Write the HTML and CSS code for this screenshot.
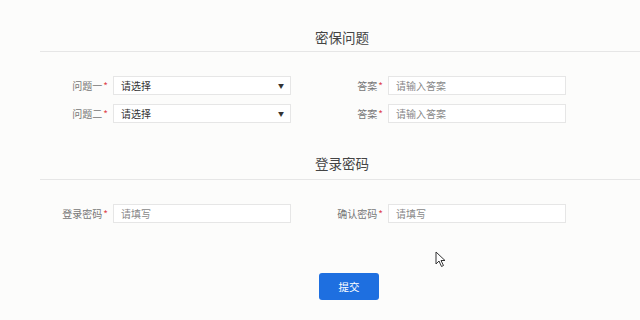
FILE: index.html
```html
<!DOCTYPE html>
<html lang="zh-CN">
<head>
    <meta charset="UTF-8">
    <meta name="viewport" content="width=device-width, initial-scale=1.0">
    <title>密保问题</title>
    <link rel="stylesheet" href="styles.css">
</head>
<body>
    <div class="container">
        <!-- 密保问题 -->
        <div class="section-title first">密保问题</div>
        <div class="rows">
            <div class="row">
                <div class="field">
                    <label>问题一<span class="req">*</span></label>
                    <div class="select"><span>请选择</span><span class="arrow">▼</span></div>
                </div>
                <div class="field">
                    <label>答案<span class="req">*</span></label>
                    <input type="text" placeholder="请输入答案">
                </div>
            </div>
            <div class="row">
                <div class="field">
                    <label>问题二<span class="req">*</span></label>
                    <div class="select"><span>请选择</span><span class="arrow">▼</span></div>
                </div>
                <div class="field">
                    <label>答案<span class="req">*</span></label>
                    <input type="text" placeholder="请输入答案">
                </div>
            </div>
        </div>

        <!-- 登录密码 -->
        <div class="section-title">登录密码</div>
        <div class="rows">
            <div class="row">
                <div class="field">
                    <label>登录密码<span class="req">*</span></label>
                    <input type="text" placeholder="请填写">
                </div>
                <div class="field">
                    <label>确认密码<span class="req">*</span></label>
                    <input type="text" placeholder="请填写">
                </div>
            </div>
        </div>

        <div class="actions">
            <button type="button">提交</button>
        </div>
    </div>

    <svg class="cursor" width="12" height="17" viewBox="0 0 12 17">
        <path d="M1 1 L1 13 L4 10 L6.5 15.5 L8.5 14.5 L6 9.5 L10 9.5 Z" fill="#fff" stroke="#333" stroke-width="1"/>
    </svg>
</body>
</html>
```

FILE: styles.css
```css
* {
    margin: 0;
    padding: 0;
    box-sizing: border-box;
    font-family: "Noto Sans CJK SC", "Liberation Sans", sans-serif;
}

body {
    background-color: #fcfcfb;
    position: relative;
    height: 320px;
    overflow: hidden;
}

.container {
    margin-left: 40px;
    width: 600px;
}

.section-title {
    text-align: center;
    font-size: 13.5px;
    line-height: 20px;
    color: #444;
    padding: 30px 0 6px 4px;
    border-bottom: 1px solid #e6e6e6;
}

.section-title.first {
    padding: 27px 0 4px 4px;
}

.rows {
    padding-top: 24px;
    display: flex;
    flex-direction: column;
    gap: 9px;
}

.row {
    display: flex;
}

.field {
    width: 275px;
    display: flex;
    align-items: center;
}

label {
    width: 68px;
    text-align: right;
    font-size: 10px;
    color: #777;
    margin-right: 5px;
    white-space: nowrap;
}

.req {
    color: #e0454f;
    margin-left: 1px;
}

input,
.select {
    width: 178px;
    height: 19px;
    border: 1px solid #e6e6e6;
    background-color: #fff;
    font-size: 10px;
    padding: 0 7px;
    color: #333;
    outline: none;
}

input::placeholder {
    color: #888;
}

.select {
    display: flex;
    align-items: center;
    justify-content: space-between;
    color: #333;
}

.arrow {
    font-size: 6px;
    color: #333;
    margin-right: -1px;
}

.actions {
    text-align: center;
    padding: 49px 0 0 18px;
}

button {
    width: 60px;
    height: 27px;
    background-color: #1e6fe0;
    color: white;
    border: none;
    border-radius: 3px;
    font-size: 10.5px;
    cursor: pointer;
}

.cursor {
    position: absolute;
    left: 435px;
    top: 251px;
}
```
